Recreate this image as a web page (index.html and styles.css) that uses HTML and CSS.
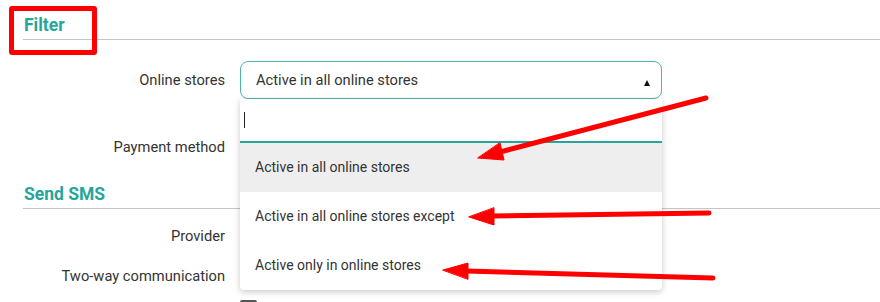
FILE: index.html
```html
<!DOCTYPE html>
<html lang="en">
<head>
    <meta charset="UTF-8">
    <meta name="viewport" content="width=device-width, initial-scale=1.0">
    <title>Settings</title>
    <link rel="stylesheet" href="styles.css">
</head>
<body>
    <div class="page">
        <!-- Filter -->
        <section class="group">
            <h2 class="group-title">Filter</h2>
            <div class="field field-stores">
                <label class="field-label">Online stores</label>
                <div class="select">
                    <div class="select-value">
                        <span>Active in all online stores</span>
                        <span class="select-arrow"></span>
                    </div>
                    <div class="select-menu">
                        <div class="select-search"><span class="caret"></span></div>
                        <ul class="select-options">
                            <li class="active">Active in all online stores</li>
                            <li>Active in all online stores except</li>
                            <li>Active only in online stores</li>
                        </ul>
                    </div>
                </div>
            </div>
            <div class="field field-payment">
                <label class="field-label">Payment method</label>
                <div></div>
            </div>
        </section>

        <!-- Send SMS -->
        <section class="group group-sms">
            <h2 class="group-title">Send SMS</h2>
            <div class="field field-provider">
                <label class="field-label">Provider</label>
                <div></div>
            </div>
            <div class="field field-twoway">
                <label class="field-label">Two-way communication</label>
                <div></div>
            </div>
            <div class="field-check">
                <span class="checkbox"></span>
            </div>
        </section>

        <!-- Annotations -->
        <div class="mark-box"></div>
        <svg class="arrows" width="880" height="302" viewBox="0 0 880 302">
            <g stroke="#f00" stroke-width="5" stroke-linecap="round" fill="#f00">
                <line x1="706" y1="98" x2="500" y2="152"/>
                <polygon points="478,158 504,160 500,143" stroke-width="1"/>
                <line x1="709" y1="213" x2="492" y2="216"/>
                <polygon points="469,217 494,225 494,208" stroke-width="1"/>
                <line x1="713" y1="278" x2="466" y2="271"/>
                <polygon points="443,270 468,263 468,279" stroke-width="1"/>
            </g>
        </svg>
    </div>
</body>
</html>
```

FILE: styles.css
```css
html, body {
    margin: 0;
    padding: 0;
    overflow: hidden;
}

body {
    font-family: Roboto, "Liberation Sans", sans-serif;
    color: #333;
    background-color: #fff;
}

.page {
    position: relative;
    width: 880px;
    height: 302px;
}

.group-title {
    margin: 0 0 0 23px;
    padding: 15px 0 4px 1px;
    line-height: 20px;
    font-size: 17.5px;
    font-weight: 700;
    color: #26a69a;
    border-bottom: 1px solid #c4c4c4;
}

.group-sms .group-title {
    padding-top: 18px;
}

.field {
    display: grid;
    grid-template-columns: 225px 422px;
    column-gap: 15px;
    align-items: center;
    height: 38px;
    font-size: 14.7px;
}

.field-label {
    text-align: right;
}

.field-stores {
    margin-top: 21px;
}

.field-payment {
    margin-top: 29px;
}

.field-provider {
    margin-top: 8px;
}

.field-twoway {
    margin-top: 2px;
}

.field-check {
    margin: 5px 0 0 240px;
}

.checkbox {
    display: block;
    width: 13px;
    height: 13px;
    border: 2px solid #555;
    border-radius: 2px;
}

/* select */
.select {
    position: relative;
    z-index: 2;
}

.select-value {
    display: flex;
    justify-content: space-between;
    align-items: center;
    box-sizing: border-box;
    height: 38px;
    padding: 0 11px 0 15px;
    border: 1px solid #4db6ac;
    border-radius: 8px;
}

.select-arrow {
    width: 0;
    height: 0;
    margin-top: 5px;
    border-left: 3.5px solid transparent;
    border-right: 3.5px solid transparent;
    border-bottom: 6px solid #111;
}

.select-menu {
    position: absolute;
    top: 100%;
    left: 0;
    right: 0;
    background-color: #fff;
    border-radius: 0 0 4px 4px;
    box-shadow: 0 2px 6px rgba(0, 0, 0, 0.22);
}

.select-search {
    display: flex;
    align-items: center;
    height: 42px;
    padding-left: 4px;
    border-bottom: 2px solid #26a69a;
}

.caret {
    width: 1px;
    height: 16px;
    background-color: #222;
}

.select-options {
    list-style: none;
    margin: 0;
    padding: 0;
}

.select-options li {
    display: flex;
    align-items: center;
    box-sizing: border-box;
    height: 49px;
    padding: 0 0 2px 15px;
    font-size: 14px;
}

.select-options li.active {
    background-color: #eee;
}

/* annotations */
.mark-box {
    position: absolute;
    left: 9px;
    top: 6px;
    width: 78px;
    height: 39px;
    border: 5px solid #f00;
    border-radius: 3px;
}

.arrows {
    position: absolute;
    left: 0;
    top: 0;
    z-index: 3;
    pointer-events: none;
}
```
